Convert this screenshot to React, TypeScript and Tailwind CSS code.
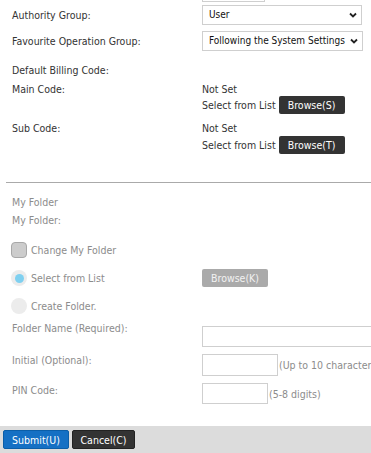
import React from "react";

const Chevron = () => (
  <svg width="8" height="6" viewBox="0 0 8 6" className="shrink-0">
    <polyline points="1,1.5 4,4.5 7,1.5" fill="none" stroke="#222" strokeWidth="1.8" />
  </svg>
);

const Select = ({ text, w }: { text: string; w: string }) => (
  <div className={`flex h-[20px] items-center justify-between gap-[3px] whitespace-nowrap border border-[#cfcfcf] bg-white pl-[6px] pr-[4px] text-[10px] text-[#111] ${w}`}>
    <span>{text}</span>
    <Chevron />
  </div>
);

const DarkBtn = ({ label }: { label: string }) => (
  <div className="flex h-[18px] w-[66px] items-center justify-center rounded-[2px] bg-[#333333] text-white">{label}</div>
);

export default function App() {
  return (
    <div
      className="relative flex h-[453px] w-[371px] flex-col overflow-hidden bg-white text-[10.5px] leading-[14px] text-[#333]"
      style={{ fontFamily: '"DejaVu Sans Condensed", "DejaVu Sans", sans-serif', fontStretch: "condensed" }}
    >
      <div className="ml-[202px] h-[2px] w-[63px] border border-t-0 border-[#cfcfcf]" />

      <div className="mt-[3px] grid h-[20px] grid-cols-[190px_1fr] items-center pl-[12px]">
        <span>Authority Group:</span>
        <Select text="User" w="w-[160px]" />
      </div>
      <div className="mt-[6px] grid h-[20px] grid-cols-[190px_1fr] items-center pl-[12px]">
        <span>Favourite Operation Group:</span>
        <Select text="Following the System Settings" w="w-[161px]" />
      </div>

      <div className="mt-[12px] pl-[12px]">Default Billing Code:</div>
      <div className="mt-[5px] grid grid-cols-[190px_1fr] pl-[12px]">
        <span>Main Code:</span>
        <span>Not Set</span>
      </div>
      <div className="grid grid-cols-[190px_1fr] items-center pl-[12px]">
        <span />
        <div className="flex items-center gap-[3px]">
          <span>Select from List</span>
          <DarkBtn label="Browse(S)" />
        </div>
      </div>
      <div className="mt-[7px] grid grid-cols-[190px_1fr] pl-[12px]">
        <span>Sub Code:</span>
        <span>Not Set</span>
      </div>
      <div className="mt-[1px] grid grid-cols-[190px_1fr] items-center pl-[12px]">
        <span />
        <div className="flex items-center gap-[3px]">
          <span>Select from List</span>
          <DarkBtn label="Browse(T)" />
        </div>
      </div>

      <div className="ml-[6px] mt-[28px] border-t border-[#aaaaaa]" />

      <div className="text-[#8c8c8c]">
        <div className="mt-[12px] pl-[12px]">My Folder</div>
        <div className="mt-[4px] pl-[12px]">My Folder:</div>

        <div className="mt-[15px] flex h-[16px] items-center gap-[4px] pl-[11px]">
          <div className="h-[16px] w-[16px] rounded-[4px] border border-[#a8a8a8] bg-[#cccccc]" />
          <span>Change My Folder</span>
        </div>

        <div className="mt-[11px] grid h-[18px] grid-cols-[191px_1fr] items-center pl-[11px]">
          <div className="flex items-center gap-[4px]">
            <div className="flex h-[16px] w-[16px] items-center justify-center rounded-full bg-[#ececec]">
              <div className="h-[9px] w-[9px] rounded-full bg-[#7fd0f0]" />
            </div>
            <span>Select from List</span>
          </div>
          <div className="flex h-[18px] w-[66px] items-center justify-center rounded-[2px] bg-[#aaaaaa] text-[#f2f2f2]">Browse(K)</div>
        </div>

        <div className="mt-[11px] flex h-[16px] items-center gap-[4px] pl-[11px]">
          <div className="h-[16px] w-[16px] rounded-full bg-[#ececec]" />
          <span>Create Folder.</span>
        </div>

        <div className="mt-[7px] grid grid-cols-[190px_1fr] pl-[12px]">
          <span>Folder Name (Required):</span>
          <div className="mt-[5px] h-[21px] w-[175px] border border-[#cfcfcf] bg-white" />
        </div>

        <div className="mt-[6px] grid grid-cols-[190px_1fr] pl-[12px]">
          <span>Initial (Optional):</span>
          <div className="mt-[1px] flex items-center whitespace-nowrap">
            <div className="h-[22px] w-[76px] shrink-0 border border-[#cfcfcf] bg-white" />
            <span className="ml-[1px]">(Up to 10 characters)</span>
          </div>
        </div>

        <div className="mt-[7px] grid grid-cols-[190px_1fr] pl-[12px]">
          <span>PIN Code:</span>
          <div className="flex items-center whitespace-nowrap">
            <div className="h-[21px] w-[66px] shrink-0 border border-[#cfcfcf] bg-white" />
            <span className="ml-[1px]">(5-8 digits)</span>
          </div>
        </div>
      </div>

      <div className="mt-auto flex h-[27px] items-start gap-[3px] bg-[#dcdcdc] pl-[3px] pt-[4px]">
        <div className="flex h-[19px] w-[66px] items-center justify-center rounded-[2px] border border-[#0b5ea8] bg-[#1570c4] text-white">Submit(U)</div>
        <div className="flex h-[19px] w-[63px] items-center justify-center rounded-[2px] border border-[#222] bg-[#333333] text-white">Cancel(C)</div>
      </div>
    </div>
  );
}
